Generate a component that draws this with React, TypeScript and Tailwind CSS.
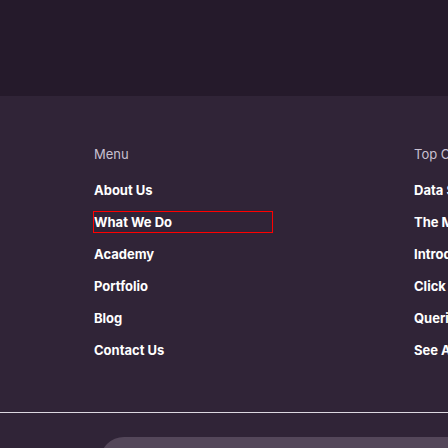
import React from "react";

const left = ["About Us", "What We Do", "Academy", "Portfolio", "Blog", "Contact Us"];
const right = ["Data Science", "The Most", "Introduction", "Click Here", "Queries", "See All"];

export default function App() {
  return (
    <div className="w-[448px] h-[448px] overflow-hidden bg-[#302437] flex flex-col" style={{ fontFamily: "Inter, 'Open Sans', sans-serif" }}>
      <div className="h-[96px] bg-[#251a2b] shrink-0" />
      <div className="flex pl-[94px] pt-[48px] h-[268px] shrink-0">
        <div className="w-[320px] shrink-0 flex flex-col">
          <div className="text-[13px] leading-[20px] text-[#c9c1d1] font-normal">Menu</div>
          <div className="flex flex-col mt-[16px] gap-[12px]">
            {left.map((t) => (
              <div
                key={t}
                className={
                  "text-[13px] leading-[20px] font-bold text-white " +
                  (t === "What We Do" ? "outline outline-1 outline-[#ff0000] w-[178px]" : "")
                }
              >
                {t}
              </div>
            ))}
          </div>
        </div>
        <div className="flex flex-col whitespace-nowrap">
          <div className="text-[13px] leading-[20px] text-[#c9c1d1] font-normal">Top Categories</div>
          <div className="flex flex-col mt-[16px] gap-[12px]">
            {right.map((t) => (
              <div key={t} className="text-[13px] leading-[20px] font-bold text-white">
                {t}
              </div>
            ))}
          </div>
        </div>
      </div>
      <div className="h-[1px] bg-[#dcd8e0] mt-[48px] shrink-0" />
      <div className="pl-[100px] pt-[24px]">
        <div className="h-[40px] bg-[#54475a] rounded-tl-[24px]" />
      </div>
    </div>
  );
}
